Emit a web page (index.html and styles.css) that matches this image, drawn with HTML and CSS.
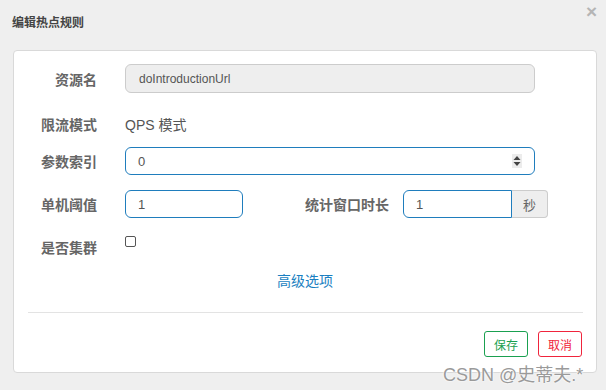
FILE: index.html
```html
<!DOCTYPE html>
<html lang="zh-CN">
<head>
    <meta charset="UTF-8">
    <title>编辑热点规则</title>
    <link rel="stylesheet" href="styles.css">
</head>
<body>
    <div class="dialog">
        <div class="dialog-header">
            <h4>编辑热点规则</h4>
            <span class="close-btn">×</span>
        </div>

        <div class="dialog-body">
            <div class="form-row row-resource">
                <label class="form-label">资源名</label>
                <div class="form-input disabled">doIntroductionUrl</div>
            </div>

            <div class="form-row row-mode">
                <label class="form-label">限流模式</label>
                <span class="form-text">QPS 模式</span>
            </div>

            <div class="form-row row-index">
                <label class="form-label">参数索引</label>
                <div class="form-input focus">
                    <span>0</span>
                    <svg class="spinner" width="10" height="14" viewBox="0 0 10 14">
                        <rect width="10" height="14" fill="#ececec"/>
                        <path d="M5 2 L8.5 6 L1.5 6 Z" fill="#444"/>
                        <path d="M5 12 L8.5 8 L1.5 8 Z" fill="#444"/>
                    </svg>
                </div>
            </div>

            <div class="form-row row-count">
                <label class="form-label">单机阈值</label>
                <div class="form-input focus small">1</div>
                <label class="form-label wide">统计窗口时长</label>
                <div class="input-group">
                    <div class="form-input focus group-input">1</div>
                    <span class="addon">秒</span>
                </div>
            </div>

            <div class="form-row row-cluster">
                <label class="form-label">是否集群</label>
                <input type="checkbox" class="check">
            </div>

            <div class="advanced">
                <a href="#">高级选项</a>
            </div>

            <div class="divider"></div>

            <div class="dialog-footer">
                <button class="btn btn-save">保存</button>
                <button class="btn btn-cancel">取消</button>
            </div>
        </div>
    </div>

    <div class="watermark">CSDN @史蒂夫.*</div>
</body>
</html>
```

FILE: styles.css
```css
* {
    margin: 0;
    padding: 0;
    box-sizing: border-box;
}

body {
    font-family: "Liberation Sans", "Noto Sans CJK SC", sans-serif;
    background: #efefef;
    color: #555;
    width: 606px;
    height: 390px;
    overflow: hidden;
    position: relative;
}

.dialog-header {
    position: relative;
    height: 50px;
    padding: 15px 12px 0;
}

.dialog-header h4 {
    font-size: 12px;
    font-weight: 700;
    color: #444;
    line-height: 16px;
}

.close-btn {
    position: absolute;
    right: 9px;
    top: 1px;
    font-size: 19px;
    font-weight: 700;
    color: #b5b5b5;
}

.dialog-body {
    margin-left: 13px;
    width: 584px;
    height: 323px;
    background: #fff;
    border: 1px solid #d9d9d9;
    border-radius: 4px;
    padding: 13px 13px 0 0;
}

.form-row {
    display: flex;
    align-items: center;
}

.form-label {
    width: 83px;
    margin-right: 28px;
    text-align: right;
    font-size: 14px;
    font-weight: 700;
    color: #666;
}

.form-label.wide {
    width: 146px;
    margin-right: 14px;
}

.form-text {
    font-size: 14px;
    color: #555;
}

.form-input {
    width: 410px;
    height: 29px;
    border: 1px solid #ccc;
    border-radius: 6px;
    padding: 0 13px;
    font-size: 13px;
    color: #555;
    display: flex;
    align-items: center;
    justify-content: space-between;
}

.form-input.disabled {
    background: #eee;
    font-size: 12px;
}

.form-input.focus {
    border-color: #1f7dbd;
    height: 28px;
    padding: 0 12px;
}

.form-input.small {
    width: 118px;
}

.input-group {
    display: flex;
}

.form-input.group-input {
    width: 109px;
    border-radius: 6px 0 0 6px;
}

.addon {
    width: 36px;
    height: 28px;
    background: #eee;
    border: 1px solid #ccc;
    border-left: none;
    border-radius: 0 4px 4px 0;
    display: flex;
    align-items: center;
    justify-content: center;
    font-size: 13px;
    color: #666;
}

.row-mode {
    height: 28px;
    margin-top: 17px;
}

.row-index {
    margin-top: 9px;
}

.row-count {
    margin-top: 15px;
}

.row-cluster {
    height: 28px;
    margin-top: 15px;
}

.check {
    appearance: none;
    width: 11px;
    height: 11px;
    border: 1px solid #555;
    border-radius: 2px;
    align-self: flex-start;
    margin-top: 3px;
}

.advanced {
    margin-top: 10px;
    text-align: center;
    line-height: 20px;
    padding-left: 13px;
}

.advanced a {
    font-size: 14px;
    color: #1a7fc1;
    text-decoration: none;
}

.divider {
    margin: 21px 0 0 14px;
    height: 1px;
    background: #e3e3e3;
}

.dialog-footer {
    display: flex;
    justify-content: flex-end;
    gap: 10px;
    margin-top: 18px;
    padding-right: 1px;
}

.btn {
    width: 44px;
    height: 26px;
    background: #fff;
    border: 1px solid;
    border-radius: 3px;
    font-family: "Liberation Sans", "Noto Sans CJK SC", sans-serif;
    font-size: 12px;
}

.btn-save {
    color: #1aa050;
    border-color: #1aa050;
}

.btn-cancel {
    color: #f0243c;
    border-color: #f0243c;
}

.watermark {
    position: absolute;
    left: 443px;
    top: 360px;
    font-size: 18px;
    color: #9a9a9a;
    text-shadow: 0 0 2px #fff, 0 0 2px #fff;
    white-space: nowrap;
}
```
